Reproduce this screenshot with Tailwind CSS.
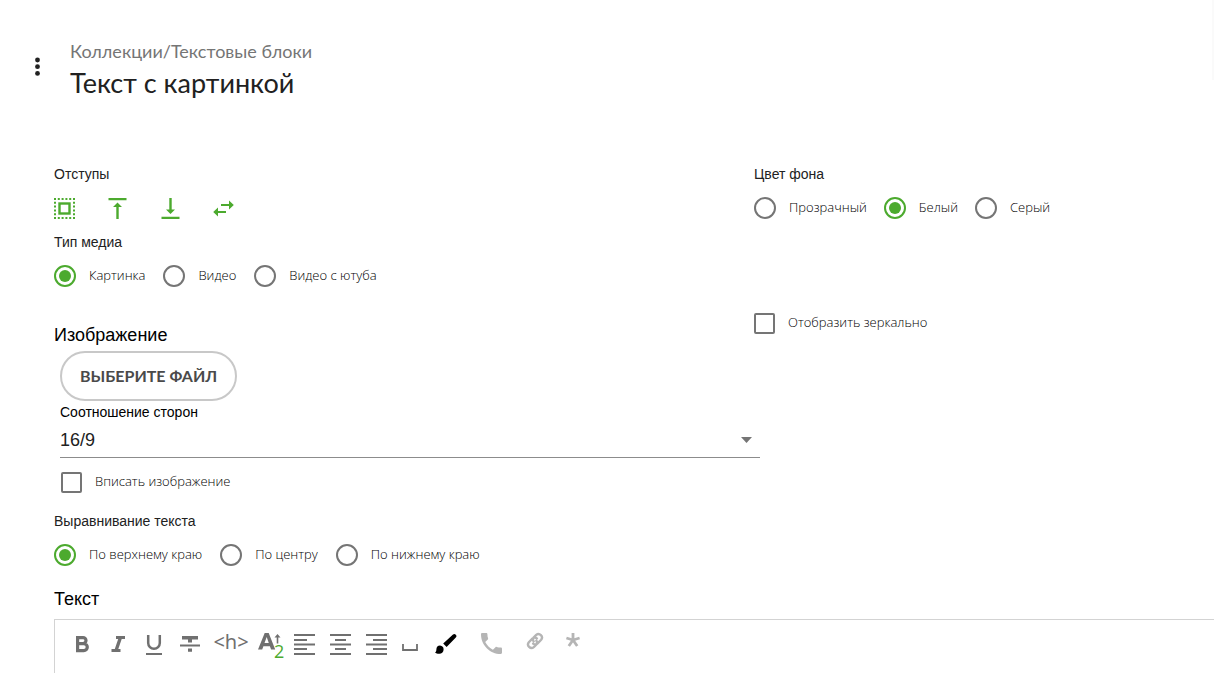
<html lang="ru">
<head>
    <meta charset="UTF-8">
    <meta name="viewport" content="width=device-width, initial-scale=1.0">
    <title>Текст с картинкой</title>
    <script src="https://cdn.jsdelivr.net/npm/@tailwindcss/browser@4"></script>
</head>
<body class="relative flex min-h-screen flex-col bg-white font-['Liberation_Sans',sans-serif] text-[#212121]">
    <div class="absolute right-0 top-0 h-20 w-0.5 bg-[#fafafa]"></div>
    <header class="flex items-center gap-5 pl-6 pt-[35px]">
        <button type="button" aria-label="Меню" class="flex size-[26px] items-center justify-center">
            <svg class="size-[26px]" viewBox="0 0 26 26" fill="#212121"><circle cx="13.5" cy="6" r="2.4"/><circle cx="13.5" cy="12.7" r="2.4"/><circle cx="13.5" cy="19.4" r="2.4"/></svg>
        </button>
        <div class="font-[Lato,sans-serif]">
            <nav class="text-[18px] leading-8 text-[#757575]"><a href="#">Коллекции</a>/<a href="#">Текстовые блоки</a></nav>
            <h1 class="text-[27px] leading-8">Текст с картинкой</h1>
        </div>
    </header>

    <form class="flex flex-1 flex-col pl-[54px] pt-[65px]">
        <div class="grid grid-cols-[70fr_46fr]">
            <!-- Left column -->
            <div>
                <div class="text-sm">Отступы</div>
                <div class="flex h-12 items-center gap-8">
                    <button type="button" aria-label="Все отступы">
                        <svg class="size-[21px]" viewBox="0 0 21 21" fill="none" stroke="#4caa2e" stroke-width="2"><path d="M0 1h2M3.800 1h2M7.600 1h2M11.400 1h2M15.200 1h2M19 1h2M0 20h2M3.800 20h2M7.600 20h2M11.400 20h2M15.200 20h2M19 20h2M0 4.800h2M0 8.600h2M0 12.400h2M0 16.200h2M19 4.800h2M19 8.600h2M19 12.400h2M19 16.200h2"/><rect x="5.500" y="5.500" width="10" height="10" stroke-width="2.400"/></svg>
                    </button>
                    <button type="button" aria-label="Отступ сверху">
                        <svg class="size-[21px]" viewBox="0 0 21 21" fill="#4caa2e"><path d="M1.500 0h18v2.300h-18zM10.500 4.500l4.500 4.500h-3.300v12h-2.400v-12h-3.300z"/></svg>
                    </button>
                    <button type="button" aria-label="Отступ снизу">
                        <svg class="size-[21px]" viewBox="0 0 21 21" fill="#4caa2e"><path d="M1.500 18.700h18v2.300h-18zM10.500 16l4.500-4.500h-3.300v-11.500h-2.400v11.500h-3.300z"/></svg>
                    </button>
                    <button type="button" aria-label="Отступы по бокам">
                        <svg class="size-[21px]" viewBox="0 0 21 21" fill="#4caa2e"><path d="M8 5.900h8v-3.400l4.800 4.500-4.800 4.500v-3.400h-8zM13 12.900h-8v-3.400l-4.800 4.500 4.800 4.500v-3.400h8z"/></svg>
                    </button>
                </div>
                <fieldset>
                    <legend class="text-sm">Тип медиа</legend>
                    <div class="flex h-12 items-center gap-[18px] font-['Open_Sans',sans-serif] text-[13px] font-light text-black">
                        <label class="flex items-center gap-[13px]"><input type="radio" name="media" checked class="size-[22px] appearance-none rounded-full border-2 border-[#757575] p-[3px] checked:border-[#4caa2e] checked:bg-[#4caa2e] checked:bg-clip-content">Картинка</label>
                        <label class="flex items-center gap-[13px]"><input type="radio" name="media" class="size-[22px] appearance-none rounded-full border-2 border-[#757575] p-[3px] checked:border-[#4caa2e] checked:bg-[#4caa2e] checked:bg-clip-content">Видео</label>
                        <label class="flex items-center gap-[13px]"><input type="radio" name="media" class="size-[22px] appearance-none rounded-full border-2 border-[#757575] p-[3px] checked:border-[#4caa2e] checked:bg-[#4caa2e] checked:bg-clip-content">Видео с ютуба</label>
                    </div>
                </fieldset>

                <h2 class="mt-[21px] text-lg text-black">Изображение</h2>
                <div class="ml-[6px] mr-[-6px] mt-0.5">
                    <button type="button" class="h-[50px] rounded-full border-2 border-[#c8c8c8] px-[18px] font-[Lato,sans-serif] text-base font-bold text-[#4a4a4a]">ВЫБЕРИТЕ ФАЙЛ</button>
                    <label for="ratio" class="mt-px block text-sm text-black">Соотношение сторон</label>
                    <div class="relative">
                        <select id="ratio" class="h-9 w-full appearance-none border-b border-[#8c8c8c] text-lg">
                            <option>16/9</option>
                            <option>4/3</option>
                            <option>1/1</option>
                        </select>
                        <svg class="pointer-events-none absolute right-2 top-[15px] h-[6px] w-[11px]" viewBox="0 0 11 6" fill="#757575"><path d="M0 0h11l-5.500 6z"/></svg>
                    </div>
                    <label class="flex h-12 items-center gap-[13px] font-['Open_Sans',sans-serif] text-[13px] font-light text-black"><input type="checkbox" class="ml-px size-[21px] appearance-none rounded-xs border-2 border-[#757575] checked:bg-[#4caa2e]">Вписать изображение</label>
                </div>

                <fieldset class="mt-[5px]">
                    <legend class="text-sm">Выравнивание текста</legend>
                    <div class="flex h-12 items-center gap-[18px] font-['Open_Sans',sans-serif] text-[13px] font-light text-black">
                        <label class="flex items-center gap-[13px]"><input type="radio" name="align" checked class="size-[22px] appearance-none rounded-full border-2 border-[#757575] p-[3px] checked:border-[#4caa2e] checked:bg-[#4caa2e] checked:bg-clip-content">По верхнему краю</label>
                        <label class="flex items-center gap-[13px]"><input type="radio" name="align" class="size-[22px] appearance-none rounded-full border-2 border-[#757575] p-[3px] checked:border-[#4caa2e] checked:bg-[#4caa2e] checked:bg-clip-content">По центру</label>
                        <label class="flex items-center gap-[13px]"><input type="radio" name="align" class="size-[22px] appearance-none rounded-full border-2 border-[#757575] p-[3px] checked:border-[#4caa2e] checked:bg-[#4caa2e] checked:bg-clip-content">По нижнему краю</label>
                    </div>
                </fieldset>
            </div>

            <!-- Right column -->
            <div>
                <fieldset>
                    <legend class="text-sm">Цвет фона</legend>
                    <div class="flex h-12 items-center gap-[17px] font-['Open_Sans',sans-serif] text-[13px] font-light text-black">
                        <label class="flex items-center gap-[13px]"><input type="radio" name="bg" class="size-[22px] appearance-none rounded-full border-2 border-[#757575] p-[3px] checked:border-[#4caa2e] checked:bg-[#4caa2e] checked:bg-clip-content">Прозрачный</label>
                        <label class="flex items-center gap-[13px]"><input type="radio" name="bg" checked class="size-[22px] appearance-none rounded-full border-2 border-[#757575] p-[3px] checked:border-[#4caa2e] checked:bg-[#4caa2e] checked:bg-clip-content">Белый</label>
                        <label class="flex items-center gap-[13px]"><input type="radio" name="bg" class="size-[22px] appearance-none rounded-full border-2 border-[#757575] p-[3px] checked:border-[#4caa2e] checked:bg-[#4caa2e] checked:bg-clip-content">Серый</label>
                    </div>
                </fieldset>
                <label class="mt-[67px] flex h-12 items-center gap-[13px] font-['Open_Sans',sans-serif] text-[13px] font-light text-black"><input type="checkbox" class="size-[21px] appearance-none rounded-xs border-2 border-[#757575] checked:bg-[#4caa2e]">Отобразить зеркально</label>
            </div>
        </div>

        <h2 class="mt-1.5 text-lg text-black">Текст</h2>
        <div class="mt-1.5 flex-1 border-l border-t border-[#d3d3d3] pl-[13px] pt-[6px]">
            <div class="flex h-9 items-center text-[#707070]">
                <button type="button" aria-label="Полужирный" class="flex w-9 flex-none justify-center pr-2"><svg class="size-6" viewBox="0 0 24 24" fill="none" stroke="currentColor" stroke-width="3.200"><path d="M7.600 5.600h5.400a3 3 0 0 1 0 6h-5.400h6.200a3.300 3.300 0 0 1 0 7h-6.200z"/></svg></button>
                <button type="button" aria-label="Курсив" class="flex w-9 flex-none justify-center pr-2"><svg class="size-6" viewBox="0 0 24 24" fill="currentColor"><path d="M10 4v3h2.200l-3.400 10h-3.300v3h9v-3h-2.200l3.400-10h3.300v-3z"/></svg></button>
                <button type="button" aria-label="Подчёркнутый" class="flex w-9 flex-none justify-center pr-2"><svg class="size-6" viewBox="0 0 24 24" fill="none" stroke="currentColor"><path d="M6.200 3v8a5.800 5.800 0 0 0 11.600 0v-8" stroke-width="2.500"/><path d="M4 22h16" stroke-width="2"/></svg></button>
                <button type="button" aria-label="Зачёркнутый" class="flex w-9 flex-none justify-center pr-2"><svg class="size-6" viewBox="0 0 24 24" fill="currentColor"><path d="M4 4h16v3.400h-6v3h-4v-3h-6zM2 12.400h20v2h-20zM10 16.500h4v3.300h-4z"/></svg></button>
                <button type="button" aria-label="Заголовок" class="w-[46px] flex-none pr-2 pb-1 text-center font-['Noto_Sans',sans-serif] text-xl">&lt;h&gt;</button>
                <button type="button" aria-label="Размер шрифта" class="relative flex w-9 flex-none"><svg class="size-7" viewBox="0 0 28 28" fill="currentColor"><path d="M0 19.500l6.700-16.500h4l6.500 16.500h-4.100l-1.200-3.300h-6.500l-1.200 3.300zM6.500 13h4.300l-2.100-6zM19.500 4l3 3.400h-2.200v6.100h-1.600v-6.100h-2.200z"/></svg><span class="absolute left-[16px] top-[9px] font-['Open_Sans',sans-serif] text-lg leading-6 text-[#4caa2e]">2</span></button>
                <button type="button" aria-label="По левому краю" class="flex w-9 flex-none"><svg class="size-[21px]" viewBox="0 0 21 21" fill="currentColor"><path d="M0 0h21v2h-21zM0 5h13v2h-13zM0 9.500h21v2h-21zM0 14h13v2h-13zM0 19h21v2h-21z"/></svg></button>
                <button type="button" aria-label="По центру" class="flex w-9 flex-none"><svg class="size-[21px]" viewBox="0 0 21 21" fill="currentColor"><path d="M0 0h21v2h-21zM5 5h11v2h-11zM0 9.500h21v2h-21zM5 14h11v2h-11zM0 19h21v2h-21z"/></svg></button>
                <button type="button" aria-label="По правому краю" class="flex w-9 flex-none"><svg class="size-[21px]" viewBox="0 0 21 21" fill="currentColor"><path d="M0 0h21v2h-21zM7 5h14v2h-14zM0 9.500h21v2h-21zM7 14h14v2h-14zM0 19h21v2h-21z"/></svg></button>
                <button type="button" aria-label="Неразрывный пробел" class="flex w-[33px] flex-none"><svg class="size-[18px]" viewBox="0 0 18 18" fill="none" stroke="currentColor" stroke-width="1.800"><path d="M1 9v6h14v-6"/></svg></button>
                <button type="button" aria-label="Цвет" class="flex w-[46px] flex-none text-black"><svg class="size-[22px]" viewBox="0 0 22 22" fill="currentColor"><path d="M5 12.500a3.800 3.800 0 0 0-3.600 3.700c0 1.600-.4 2.600-1.400 3.400 1 .9 2.400 1.200 4 1.200a4.200 4.200 0 0 0 4.600-4.200a4 4 0 0 0-3.600-4.100zM20.800 1.700a2 2 0 0 0-2.800-.2l-9.800 8.900 3.400 3.600 9.200-9.500a2 2 0 0 0 0-2.800z"/></svg></button>
                <button type="button" aria-label="Телефон" class="flex w-[45px] flex-none pb-0.5 text-[#b5b5b5]"><svg class="size-[21px]" viewBox="3 3 18 18" fill="currentColor"><path d="M6.620 10.790c1.440 2.830 3.760 5.140 6.590 6.590l2.200-2.200c.27-.27.67-.36 1.020-.24 1.120.37 2.330.57 3.570.57.55 0 1 .45 1 1v3.490c0 .55-.45 1-1 1-9.390 0-17-7.610-17-17 0-.55.45-1 1-1h3.500c.55 0 1 .45 1 1 0 1.250.2 2.450.57 3.570.11.35.03.74-.25 1.020z"/></svg></button>
                <button type="button" aria-label="Ссылка" class="flex w-10 flex-none pb-1.5 text-[#b5b5b5]"><svg class="size-[18px]" viewBox="0 0 24 24" fill="none" stroke="currentColor" stroke-width="3.200" stroke-linecap="round"><path d="M9.500 15.500a4.600 4.600 0 0 0 6-.4l4.700-4.700a4.700 4.700 0 0 0-6.600-6.600l-3.400 3.400a4.700 4.700 0 0 0 0 5.300M14.500 8.500a4.600 4.600 0 0 0-6 .4l-4.700 4.700a4.700 4.700 0 0 0 6.600 6.600l3.400-3.400a4.700 4.700 0 0 0 0-5.300"/></svg></button>
                <button type="button" aria-label="Сноска" class="flex flex-none pb-2 text-[#b5b5b5]"><svg class="size-[14px]" viewBox="0 0 14 14" fill="none" stroke="currentColor" stroke-width="2.800"><path d="M7 0v7M7 7l-6.600-2M7 7l6.600-2M7 7l-4.200 6M7 7l4.200 6"/></svg></button>
            </div>
        </div>
    </form>
</body>
</html>
